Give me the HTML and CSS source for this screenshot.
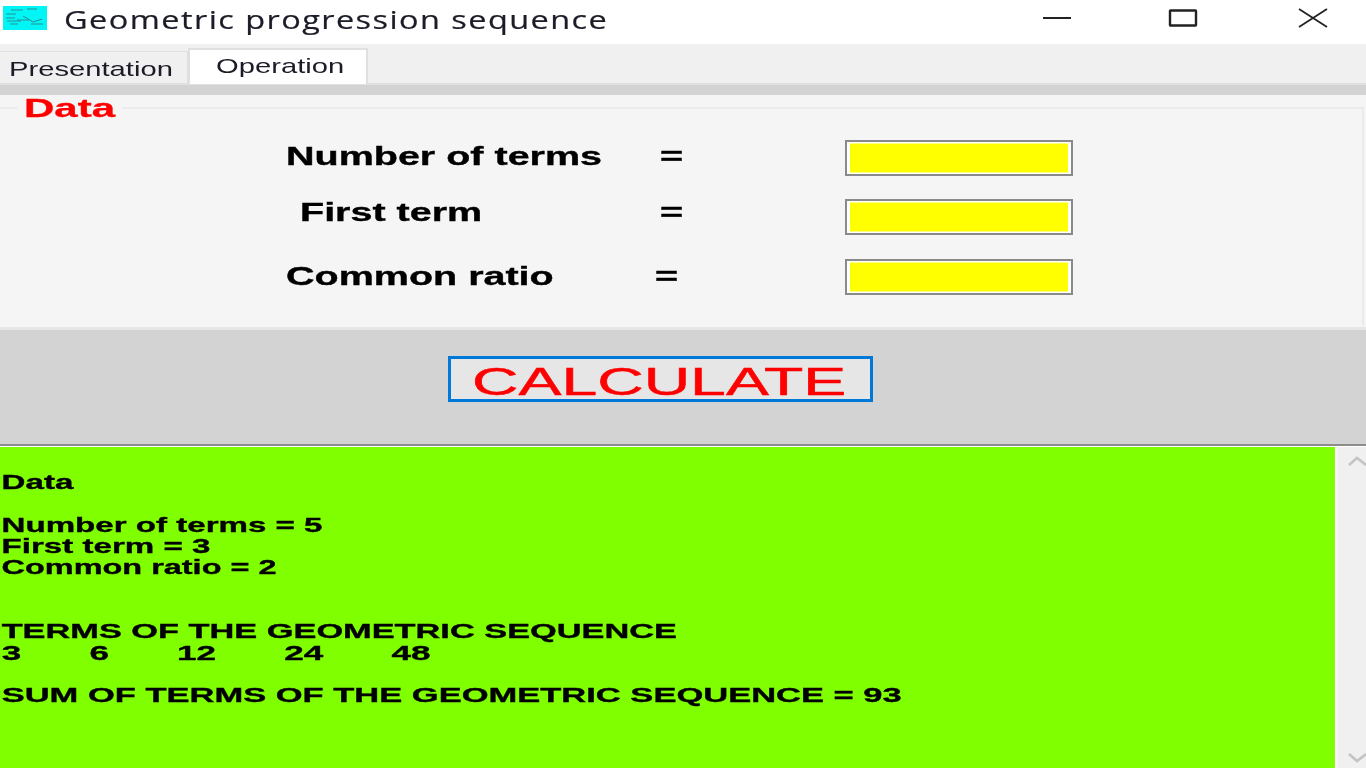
FILE: index.html
```html
<!DOCTYPE html>
<html lang="en">
<head>
<meta charset="utf-8">
<title>Geometric progression sequence</title>
<link rel="stylesheet" href="styles.css">
</head>
<body>
<div class="window">
  <header class="titlebar">
    <svg class="app-icon" viewBox="0 0 44 24" aria-hidden="true">
      <rect width="44" height="24" fill="#00f5f5"/>
      <path d="M8 4h12M24 3h10M3 8h10M3 12h9M14 14h12M4 15h14M20 10l10 6 9-3M28 18h12M7 18h8" stroke="#2a8f98" stroke-width="1" fill="none"/>
    </svg>
    <h1 class="title"><span class="wide-title">Geometric progression sequence</span></h1>
    <div class="controls">
      <svg class="ctl ctl-min" viewBox="0 0 30 20" aria-hidden="true"><path d="M1 10h28" stroke="#222" stroke-width="2"/></svg>
      <svg class="ctl ctl-max" viewBox="0 0 30 20" aria-hidden="true"><rect x="2" y="2.5" width="26" height="15" rx="0.5" fill="none" stroke="#222" stroke-width="2.4"/></svg>
      <svg class="ctl ctl-close" viewBox="0 0 30 20" aria-hidden="true"><path d="M1 1l28 18M29 1L1 19" stroke="#222" stroke-width="1.8"/></svg>
    </div>
  </header>
  <nav class="tabs">
    <div class="tab tab-idle"><span class="wide-tab">Presentation</span></div>
    <div class="tab tab-active"><span class="wide-tab">Operation</span></div>
  </nav>
  <div class="band"></div>
  <section class="panel">
    <fieldset class="group">
      <legend class="group-title"><span class="wide-legend">Data</span></legend>
      <div class="row row-1">
        <span class="label"><span class="wide">Number of terms</span></span>
        <span class="eq"><span class="wide">=</span></span>
        <span class="field"></span>
      </div>
      <div class="row row-2">
        <span class="label label-in"><span class="wide">First term</span></span>
        <span class="eq"><span class="wide">=</span></span>
        <span class="field"></span>
      </div>
      <div class="row row-3">
        <span class="label"><span class="wide">Common ratio</span></span>
        <span class="eq eq-left"><span class="wide">=</span></span>
        <span class="field"></span>
      </div>
    </fieldset>
  </section>
  <section class="action">
    <button class="calc" type="button"><span class="wide-calc">CALCULATE</span></button>
  </section>
  <section class="result">
    <div class="output">
      <div class="line">Data</div>
      <div class="line gap-1">Number of terms = 5</div>
      <div class="line">First term = 3</div>
      <div class="line narrow">Common ratio = 2</div>
      <div class="line caps caps-short gap-2">TERMS OF THE GEOMETRIC SEQUENCE</div>
      <div class="line nums">3       6       12       24       48</div>
      <div class="line caps gap-1">SUM OF TERMS OF THE GEOMETRIC SEQUENCE = 93</div>
    </div>
    <aside class="scrollbar">
      <svg class="chev" viewBox="0 0 18 10" aria-hidden="true"><path d="M1 9l8-7 9 7" fill="none" stroke="#c4c4c4" stroke-width="2.6"/></svg>
      <svg class="chev" viewBox="0 0 18 10" aria-hidden="true"><path d="M1 1l8 7 9-7" fill="none" stroke="#c4c4c4" stroke-width="2.6"/></svg>
    </aside>
  </section>
</div>
</body>
</html>
```
FILE: styles.css
```css
* { box-sizing: border-box; }
html, body { margin: 0; padding: 0; }
body { width: 1366px; height: 768px; overflow: hidden; background: #f0f0f0; font-family: "Liberation Sans", Arial, sans-serif; color: #000; }
.window { display: flex; flex-direction: column; height: 768px; filter: blur(0.5px); }

.wide, .wide-title, .wide-calc, .wide-tab, .wide-legend { display: inline-block; transform-origin: left center; white-space: nowrap; }
.wide { transform: scaleX(1.58); -webkit-text-stroke: 0.35px #000; }
.wide-tab { transform: scaleX(1.39); }
.wide-legend { transform: scaleX(1.68); margin-left: 7px; -webkit-text-stroke: 0.3px #f00; }

.titlebar { height: 44px; background: #fff; display: flex; align-items: center; padding-left: 3px; flex: none; }
.app-icon { width: 44px; height: 24px; margin-top: -8px; flex: none; }
.title { margin: -6px 0 0 17px; font: 400 25px "Open Sans", sans-serif; letter-spacing: 1.1px; color: #1c1c28; flex: 1; }
.wide-title { transform: scaleX(1.3); -webkit-text-stroke: 0.2px #1c1c28; }
.controls { display: flex; align-items: center; margin-top: -8px; }
.ctl { height: 20px; width: 30px; flex: none; }
.ctl-min { margin-right: 96px; }
.ctl-max { margin-right: 100px; }
.ctl-close { margin-right: 38px; }

.tabs { height: 41px; background: #f0f0f0; display: flex; align-items: flex-end; flex: none; border-bottom: 2px solid #e0e0e0; }
.tab { font-size: 21px; color: #1c1c28; }
.tab-idle { width: 188px; height: 32px; padding: 5px 0 0 9px; background: #f0f0f0; border: 1px solid #e0e0e0; border-width: 1px 1px 0 0; }
.tab-active { width: 180px; height: 36px; margin-bottom: -1px; padding: 4px 0 0 26px; background: #fff; border: 2px solid #e0e0e0; border-bottom: 0; }

.band { height: 10px; background: #d3d3d3; flex: none; }

.panel { height: 235px; background: #f5f5f5; flex: none; border-bottom: 3px solid #e6e6e6; }
.group { margin: 0 2px 0 0; padding: 0; height: 231px; border: 2px solid #ebebeb; border-bottom: 0; border-left: 0; }
.group-title { margin-left: 17px; padding: 0; width: 105px; height: 26px; font-size: 25px; line-height: 26px; font-weight: 700; color: #f00; }

.row { display: grid; grid-template-columns: 374px 185px 228px; padding-left: 286px; align-items: center; font-size: 25px; font-weight: 700; }
.row-1 { margin-top: 19px; }
.row-2 { margin-top: 23px; }
.row-3 { margin-top: 24px; }
.label-in { padding-left: 14px; }
.row-1 .label, .row-1 .eq { margin-top: -3px; }
.row-2 .label, .row-2 .eq { margin-top: -10px; }
.row-3 .label, .row-3 .eq { margin-top: -1px; }
.eq-left { margin-left: -5px; }
.field { height: 36px; background: #ff0; border: 2px solid #8a8a8a; box-shadow: inset 3px 0 #fff, inset -3px 0 #fff, inset 0 1.5px #fff, inset 0 -1.5px #fff; }

.action { height: 116px; background: #d3d3d3; display: flex; justify-content: center; align-items: flex-start; padding: 26px 0 0 0; border-bottom: 2px solid #8c8c8c; flex: none; }
.calc { width: 425px; height: 46px; margin-right: 45px; padding: 3px 0 0 21px; background: #e6e6e6; border: 3px solid #0078d7; border-radius: 0; font: 400 39px "Liberation Sans", sans-serif; color: #f00; text-align: left; line-height: 40px; }
.wide-calc { transform: scaleX(1.65); -webkit-text-stroke: 0.5px #f00; }

.result { flex: 1; display: flex; border-top: 1px solid #fff; min-height: 0; }
.output { width: 1335px; background: #7fff00; overflow: hidden; flex: none; padding-top: 24px; }
.line { height: 21.33px; padding-left: 1px; font: 700 21px/21.33px "Liberation Sans", sans-serif; white-space: pre; transform: scaleX(1.576); transform-origin: left center; -webkit-text-stroke: 0.35px #000; }
.narrow { transform: scaleX(1.545); }
.caps { transform: scaleX(1.643); }
.caps-short { transform: scaleX(1.635); }
.nums { transform: scaleX(1.67); }
.gap-1 { margin-top: 21.33px; }
.gap-2 { margin-top: 42.66px; }
.scrollbar { flex: 1; background: #f0f0f0; border-left: 3px solid #f7f3f7; display: flex; flex-direction: column; justify-content: space-between; align-items: flex-end; padding: 9px 0 5px; }
.chev { width: 18px; height: 10px; display: block; }
```
